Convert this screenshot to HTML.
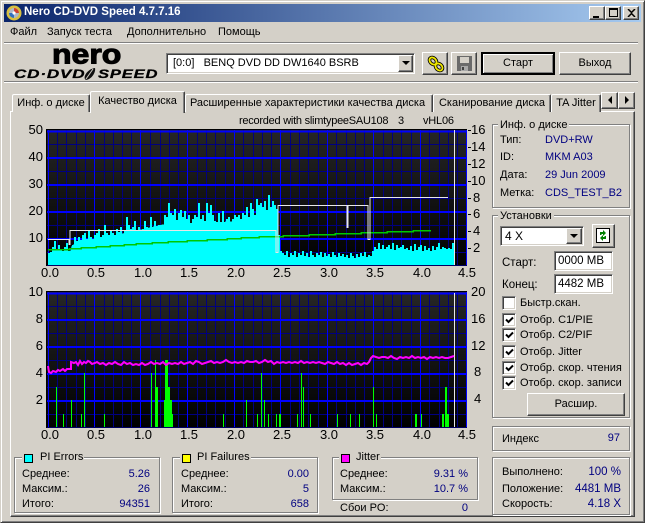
<!DOCTYPE html>
<html><head><meta charset="utf-8"><style>
html,body{margin:0;padding:0;background:#d4d0c8}
#w{position:relative;width:645px;height:523px;overflow:hidden;background:#d4d0c8;font:11px/13px "Liberation Sans","Noto Sans CJK SC",sans-serif;color:#000}
#w div,#w svg{position:absolute;box-sizing:border-box}
.t{white-space:nowrap;height:13px}
.n{color:#000080}
.r{text-align:right}
.c{text-align:center}
.a{font-size:13px;line-height:14px;height:14px;white-space:nowrap;color:#000}
.up{background:#d4d0c8;border:1px solid;border-color:#fff #404040 #404040 #fff;box-shadow:inset -1px -1px 0 #808080}
.sk{background:#fff;border:1px solid;border-color:#808080 #fff #fff #808080;box-shadow:inset 1px 1px 0 #404040,inset -1px -1px 0 #d4d0c8}
.g{border:1px solid #808080;box-shadow:1px 1px 0 #fff,inset 1px 1px 0 #fff}
.l{background:#d4d0c8;height:13px;white-space:nowrap;padding:0 2px}
.tab{background:#d4d0c8;border:1px solid;border-color:#fff #404040 transparent #fff;border-bottom:0;border-radius:2px 2px 0 0;box-shadow:inset -1px 0 0 #808080;text-align:center;white-space:nowrap}
.cb{width:14px;height:14px;left:502px}
.sw{width:9px;height:9px;border:1px solid #000;box-sizing:border-box}
.hl{height:1px;background:#808080;box-shadow:0 1px 0 #fff}
</style></head><body><div id="w">
<!-- window edges -->
<div style="left:0;top:0;width:645px;height:523px;border:1px solid;border-color:#d4d0c8 #404040 #404040 #d4d0c8;box-shadow:inset 1px 1px 0 #fff,inset -1px -1px 0 #808080"></div>
<!-- title -->
<div style="left:4px;top:4px;width:637px;height:18px;background:linear-gradient(90deg,#0a246a,#a6caf0)"></div>
<svg style="left:6px;top:5px" width="16" height="16" viewBox="0 0 16 16"><circle cx="8" cy="8" r="7.5" fill="#d8c040"/><circle cx="8" cy="8" r="5" fill="#b0b8c8"/><path d="M8 3a5 5 0 0 1 5 5H8z" fill="#d04030"/><path d="M8 8v5a5 5 0 0 1-5-5z" fill="#3070c0"/><circle cx="8" cy="8" r="1.6" fill="#fff"/></svg>
<div class="t" style="left:24px;top:6px;color:#fff;font-weight:bold;font-size:11.5px">Nero CD-DVD Speed 4.7.7.16</div>
<div class="up" style="left:589px;top:6px;width:16px;height:14px"><svg style="left:3px;top:2px" width="9" height="9"><rect x="0" y="7" width="6" height="2"/></svg></div>
<div class="up" style="left:605px;top:6px;width:16px;height:14px"><svg style="left:3px;top:1px" width="9" height="9"><path d="M.5 1.5h8v7h-8z" fill="none" stroke="#000"/><rect width="9" height="2"/></svg></div>
<div class="up" style="left:623px;top:6px;width:16px;height:14px"><svg style="left:3px;top:2px" width="9" height="8"><path d="M1 0l3.500 3.500L8 0M1 8l3.500-3.500L8 8" fill="none" stroke="#000" stroke-width="1.500"/></svg></div>
<!-- menu -->
<div class="t" style="left:10px;top:26px">Файл</div>
<div class="t" style="left:47px;top:26px">Запуск теста</div>
<div class="t" style="left:127px;top:26px">Дополнительно</div>
<div class="t" style="left:218px;top:26px">Помощь</div>
<div class="hl" style="left:4px;top:42px;width:634px"></div>
<div class="hl" style="left:4px;top:81px;width:634px"></div>
<!-- logo -->
<div class="t" style="left:52px;top:36px;height:32px;font:bold 32px/32px 'Liberation Sans',sans-serif;-webkit-text-stroke:1.2px #000;letter-spacing:0;transform-origin:0 100%;transform:scaleY(.88)">nero</div>
<div class="t" style="left:14px;top:67px;height:14px;font:italic bold 12px/14px 'Liberation Sans',sans-serif;letter-spacing:.6px;-webkit-text-stroke:.3px #000;transform-origin:0 50%;transform:scaleX(1.42)">CD·DVD</div>
<svg style="left:81px;top:67px" width="16" height="14"><path d="M5 13C1 11 6 2 14 1c1 4-3 11-9 12z" fill="#111"/><path d="M5 12L12 2" stroke="#d4d0c8"/></svg>
<div class="t" style="left:98px;top:67px;height:14px;font:italic bold 12px/14px 'Liberation Sans',sans-serif;letter-spacing:.6px;-webkit-text-stroke:.3px #000;transform-origin:0 50%;transform:scaleX(1.38)">SPEED</div>
<!-- drive combo -->
<div class="sk" style="left:166px;top:53px;width:249px;height:21px"></div>
<div class="t" style="left:173px;top:57px;white-space:pre">[0:0]   BENQ DVD DD DW1640 BSRB</div>
<div class="up" style="left:398px;top:55px;width:15px;height:17px"><svg style="left:3px;top:5px" width="8" height="5"><path d="M0 0h8L4 4z"/></svg></div>
<div class="up" style="left:422px;top:52px;width:26px;height:23px"><svg style="left:3px;top:2px" width="20" height="18" viewBox="0 0 20 18"><g fill="none" stroke="#000" stroke-width="3.500"><ellipse cx="7" cy="6" rx="4" ry="3" transform="rotate(45 7 6)"/><ellipse cx="13" cy="12" rx="4" ry="3" transform="rotate(45 13 12)"/></g><g fill="none" stroke="#f0e800" stroke-width="1.800"><ellipse cx="7" cy="6" rx="4" ry="3" transform="rotate(45 7 6)"/><ellipse cx="13" cy="12" rx="4" ry="3" transform="rotate(45 13 12)"/></g></svg></div>
<div class="up" style="left:451px;top:52px;width:26px;height:23px"><svg style="left:5px;top:3px" width="15" height="15" viewBox="0 0 15 15"><path d="M0 0h15v15H0z" fill="#6a6a6a"/><path d="M3 1h9v6H3z" fill="#d4d0c8"/><path d="M4 10h7v5H4z" fill="#a8a8a8"/><path d="M5 11h2v3H5z" fill="#404040"/></svg></div>
<div class="up" style="left:481px;top:52px;width:74px;height:23px;border:2px solid #000;outline:0;box-shadow:inset 1px 1px 0 #fff,inset -1px -1px 0 #808080"></div>
<div class="t c" style="left:481px;top:57px;width:74px">Старт</div>
<div class="up" style="left:559px;top:52px;width:72px;height:23px"></div>
<div class="t c" style="left:559px;top:57px;width:72px">Выход</div>
<!-- page -->
<div style="left:10px;top:111px;width:625px;height:406px;border:1px solid;border-color:#fff #404040 #404040 #fff;box-shadow:inset -1px -1px 0 #808080"></div>
<!-- tabs -->
<div class="tab" style="left:12px;top:94px;width:78px;height:18px;padding-top:2px">Инф. о диске</div>
<div class="tab" style="left:185px;top:94px;width:248px;height:18px;padding:2px 3px 0 0">Расширенные характеристики качества диска</div>
<div class="tab" style="left:433px;top:94px;width:118px;height:18px;padding-top:2px">Сканирование диска</div>
<div class="tab" style="left:551px;top:94px;width:50px;height:18px;padding-top:2px">TA Jitter</div>
<div class="tab" style="left:90px;top:91px;width:95px;height:22px;padding-top:3px;z-index:2">Качество диска</div>
<div class="up" style="left:601px;top:92px;width:17px;height:17px;z-index:2"><svg style="left:5px;top:3px" width="6" height="9"><path d="M5 0v8L1 4z"/></svg></div>
<div class="up" style="left:618px;top:92px;width:17px;height:17px;z-index:2"><svg style="left:5px;top:3px" width="6" height="9"><path d="M1 0v8l4-4z"/></svg></div>

<!-- charts -->
<svg style="left:0;top:0" width="645" height="523" viewBox="0 0 645 523">
<defs><linearGradient id="bg" x1="0" y1="0" x2="0" y2="1"><stop offset="0" stop-color="#262626"/><stop offset="1" stop-color="#000"/></linearGradient>
<g id="vm" stroke="#000080" stroke-width="1">
<path d="M57.500 0v136M66.500 0v136M76.500 0v136M85.500 0v136M104.500 0v136M113.500 0v136M122.500 0v136M131.500 0v136M150.500 0v136M160.500 0v136M169.500 0v136M178.500 0v136M197.500 0v136M206.500 0v136M215.500 0v136M225.500 0v136M243.500 0v136M253.500 0v136M262.500 0v136M271.500 0v136M290.500 0v136M299.500 0v136M308.500 0v136M318.500 0v136M336.500 0v136M346.500 0v136M355.500 0v136M364.500 0v136M383.500 0v136M392.500 0v136M401.500 0v136M411.500 0v136M429.500 0v136M439.500 0v136M448.500 0v136M457.500 0v136"/>
<path d="M47 14.500h420M47 41.500h420M47 68.500h420M47 95.500h420M47 122.500h420"/>
</g>
<g id="vM" stroke="#0000ff" stroke-width="1">
<path d="M48.500 0v136M94.500 0v136M140.500 0v136M187.500 0v136M234.500 0v136M280.500 0v136M327.500 0v136M373.500 0v136M420.500 0v136M466.500 0v136"/>
<path d="M47 1.500h420M47 28h420M47 55h420M47 82h420M47 109h420" stroke-width="2"/>
<path d="M47 135.500h420" stroke="#000060"/>
</g></defs>
<g shape-rendering="crispEdges">
<rect x="46" y="129" width="421" height="137" fill="#000"/>
<rect x="47" y="130" width="420" height="136" fill="url(#bg)"/>
<use href="#vm" y="130"/><use href="#vM" y="130"/>
<path transform="translate(0 265) scale(1 -1)" fill="#00ffff" d="M48 0V12h2V13h2V18h2V24h2V16h2V20h2V16h2V14h2V18h2V22h2V14h2V12h2V16h2V28h2V24h2V28h2V25h2V30h2V32h2V26h2V34h2V28h2V26h2V30h2V32h2V36h2V28h2V30h2V40h2V32h2V30h2V34h2V32h2V28h2V36h2V33h2V38h2V30h2V34h2V48h2V40h2V36h2V38h2V44h2V34h2V38h2V34h2V36h2V44h2V38h2V36h2V48h2V36h2V44h2V38h2V40h2V35h2V40h2V50h2V48h2V62h2V52h2V50h2V56h2V45h2V52h2V55h2V48h2V54h2V46h2V50h2V42h2V46h2V50h2V48h2V62h2V46h2V50h2V44h2V62h2V52h2V60h2V50h2V44h2V38h2V52h2V36h2V54h2V40h2V46h2V48h2V42h2V46h2V50h2V48h2V50h2V46h2V52h2V50h2V58h2V48h2V62h2V56h2V50h2V66h2V60h2V62h2V58h2V64h2V55h2V70h2V58h2V64h2V60h2V56h2V30h2V14h2V12h2V10h2V14h2V8h2V12h2V10h2V14h2V8h2V12h2V10h2V14h2V9h2V12h2V8h2V14h2V10h2V8h2V12h2V10h2V13h2V8h2V12h2V9h2V11h2V8h2V13h2V10h2V8h2V12h2V9h2V11h2V8h2V10h2V7h2V12h2V9h2V6h2V11h2V8h2V12h2V9h2V13h2V8h2V10h2V9h2V14h2V18h2V16h2V22h2V16h2V20h2V16h2V18h2V20h2V16h2V22h2V15h2V20h2V17h2V18h2V20h2V16h2V17h2V15h2V19h2V14h2V21h2V15h2V18h2V20h2V14h2V19h2V15h2V17h2V14h2V19h2V15h2V18h2V22h2V16h2V18h2V17h2V16h2V17h2V16h2V22h2V0z"/>
<!-- solid base under the noisy cyan columns -->
<path fill="#00ffff" d="M48 265V255L70 252L72 245L100 238L130 232L165 224L200 223L240 221L276 216V265zM280 265V258H372V251H454V265z"/>
<path d="M48 249.500h21v-1h12v-1h15v-1h14v-1h14v-1h12v-1h16v-1h16v-1h19v-1h20v-1h20v-1h14v-1h18v-1h24v-1h26v-1h26v-1h26v-1h26v-1h26v-1h18" fill="none" stroke="#00c800" stroke-width="1.500"/>
<path d="M48 239.500h21v5h1v-14h206v22h2v-47h69v22h1v-22h20v34h2v-42h78" fill="none" stroke="#e8e8e8" stroke-width="1"/>
<rect x="454" y="130" width="1" height="135" fill="#e8e8e8"/>

<rect x="46" y="291" width="421" height="137" fill="#000"/>
<rect x="47" y="292" width="420" height="136" fill="url(#bg)"/>
<use href="#vm" y="292"/><use href="#vM" y="292"/>
<rect x="454" y="293" width="1" height="134" fill="#e8e8e8"/>
<path fill="#00ff00" d="M56 387h1v40h-1zM63 414h1v13h-1zM71 400h1v27h-1zM81 414h1v13h-1zM84 373h1v54h-1zM104 414h1v13h-1zM151 373h1v54h-1zM155 360h1v67h-1zM156 387h2v40h-2zM164 400h1v27h-1zM165 360h3v67h-3zM168 387h2v40h-2zM170 400h2v27h-2zM172 414h1v13h-1zM223 414h1v13h-1zM246 400h1v27h-1zM257 414h1v13h-1zM261 373h1v54h-1zM264 400h1v27h-1zM268 414h1v13h-1zM276 414h1v13h-1zM279 414h2v13h-2zM297 414h1v13h-1zM301 373h1v54h-1zM303 387h1v40h-1zM310 414h1v13h-1zM337 414h1v13h-1zM350 414h1v13h-1zM359 414h1v13h-1zM373 387h1v40h-1zM376 414h1v13h-1zM415 414h2v13h-2zM421 414h1v13h-1zM442 414h2v13h-2zM445 387h2v40h-2zM447 414h2v13h-2z"/>
</g>
<polyline fill="none" stroke="#ff00ff" stroke-width="2" points="48,366 49,372 51,373 53,371 56,372 58,370 60,371 63,369 65,371 67,369 69,369 71,369 71,362 74,363 76,362 78,365 80,361 82,364 84,362 86,363 88,361 90,362 92,364 95,363 97,362 100,364 103,363 106,365 109,363 112,364 115,362 118,364 121,365 124,362 127,364 130,363 133,365 136,364 139,365 142,363 145,365 148,364 151,362 154,364 157,363 160,364 163,362 166,365 169,363 172,364 175,363 178,364 181,362 184,364 187,363 190,362 193,364 196,361 199,362 202,364 205,363 208,362 211,361 214,363 217,362 220,363 223,362 226,360 229,362 232,363 235,362 238,363 241,362 244,363 247,361 250,362 253,362 256,361 259,363 262,362 265,360 268,362 271,361 274,364 277,362 280,363 283,362 286,363 289,362 292,363 295,362 298,363 301,361 304,363 307,362 310,363 313,362 316,363 319,362 322,363 325,364 328,362 331,363 334,364 337,362 340,364 343,363 346,365 349,363 352,365 355,364 358,363 361,365 364,363 367,364 369,362 371,358 373,356 376,357 379,358 382,357 385,357 388,358 391,356 394,358 397,359 400,357 403,358 406,357 409,358 412,356 415,358 418,357 421,358 424,357 427,359 430,357 433,358 436,357 439,358 442,357 445,358 448,358 451,357 454,356"/>
<g stroke="#000" shape-rendering="crispEdges"><path d="M468 130.500h3M468 147.500h3M468 164.500h3M468 181.500h3M468 198.500h3M468 214.500h3M468 231.500h3M468 248.500h3"/></g>
</svg>
<!-- chart title -->
<div class="t" style="left:239px;top:115px;letter-spacing:-.25px">recorded with slimtypeeSAU108</div>
<div class="t" style="left:398px;top:115px">3</div>
<div class="t" style="left:423px;top:115px;letter-spacing:-.2px">vHL06</div>
<!-- left axis top -->
<div class="a r" style="left:23px;top:123px;width:20px">50</div>
<div class="a r" style="left:23px;top:150px;width:20px">40</div>
<div class="a r" style="left:23px;top:177px;width:20px">30</div>
<div class="a r" style="left:23px;top:204px;width:20px">20</div>
<div class="a r" style="left:23px;top:231px;width:20px">10</div>
<!-- right axis top -->
<div class="a" style="left:471px;top:123px">16</div>
<div class="a" style="left:471px;top:140px">14</div>
<div class="a" style="left:471px;top:157px">12</div>
<div class="a" style="left:471px;top:174px">10</div>
<div class="a" style="left:473px;top:191px">8</div>
<div class="a" style="left:473px;top:207px">6</div>
<div class="a" style="left:473px;top:224px">4</div>
<div class="a" style="left:473px;top:241px">2</div>
<!-- x axis top -->
<div class="a c" style="left:35px;top:266px;width:30px">0.0</div>
<div class="a c" style="left:81px;top:266px;width:30px">0.5</div>
<div class="a c" style="left:128px;top:266px;width:30px">1.0</div>
<div class="a c" style="left:174px;top:266px;width:30px">1.5</div>
<div class="a c" style="left:221px;top:266px;width:30px">2.0</div>
<div class="a c" style="left:267px;top:266px;width:30px">2.5</div>
<div class="a c" style="left:314px;top:266px;width:30px">3.0</div>
<div class="a c" style="left:360px;top:266px;width:30px">3.5</div>
<div class="a c" style="left:407px;top:266px;width:30px">4.0</div>
<div class="a c" style="left:452px;top:266px;width:30px">4.5</div>
<!-- left axis bottom -->
<div class="a r" style="left:23px;top:285px;width:20px">10</div>
<div class="a r" style="left:23px;top:312px;width:20px">8</div>
<div class="a r" style="left:23px;top:339px;width:20px">6</div>
<div class="a r" style="left:23px;top:366px;width:20px">4</div>
<div class="a r" style="left:23px;top:393px;width:20px">2</div>
<!-- right axis bottom -->
<div class="a" style="left:471px;top:285px">20</div>
<div class="a" style="left:471px;top:312px">16</div>
<div class="a" style="left:471px;top:339px">12</div>
<div class="a" style="left:474px;top:365px">8</div>
<div class="a" style="left:474px;top:392px">4</div>
<!-- x axis bottom -->
<div class="a c" style="left:35px;top:428px;width:30px">0.0</div>
<div class="a c" style="left:81px;top:428px;width:30px">0.5</div>
<div class="a c" style="left:128px;top:428px;width:30px">1.0</div>
<div class="a c" style="left:174px;top:428px;width:30px">1.5</div>
<div class="a c" style="left:221px;top:428px;width:30px">2.0</div>
<div class="a c" style="left:267px;top:428px;width:30px">2.5</div>
<div class="a c" style="left:314px;top:428px;width:30px">3.0</div>
<div class="a c" style="left:360px;top:428px;width:30px">3.5</div>
<div class="a c" style="left:407px;top:428px;width:30px">4.0</div>
<div class="a c" style="left:452px;top:428px;width:30px">4.5</div>

<!-- disc info -->
<div class="g" style="left:492px;top:124px;width:138px;height:84px"></div>
<div class="l" style="left:498px;top:119px">Инф. о диске</div>
<div class="t" style="left:500px;top:134px">Тип:</div><div class="t n" style="left:545px;top:134px">DVD+RW</div>
<div class="t" style="left:500px;top:151px">ID:</div><div class="t n" style="left:545px;top:151px">MKM A03</div>
<div class="t" style="left:500px;top:169px">Дата:</div><div class="t n" style="left:545px;top:169px">29 Jun 2009</div>
<div class="t" style="left:500px;top:187px">Метка:</div><div class="t n" style="left:545px;top:187px">CDS_TEST_B2</div>
<!-- settings -->
<div class="g" style="left:492px;top:215px;width:138px;height:203px"></div>
<div class="l" style="left:498px;top:210px">Установки</div>
<div class="sk" style="left:500px;top:226px;width:84px;height:20px"></div>
<div class="t" style="left:505px;top:230px;font-size:12px;white-space:pre">4 X</div>
<div class="up" style="left:566px;top:228px;width:16px;height:16px"><svg style="left:3px;top:5px" width="8" height="5"><path d="M0 0h8L4 4z"/></svg></div>
<div class="up" style="left:592px;top:224px;width:23px;height:24px"><svg style="left:3px;top:3px" width="15" height="16" viewBox="0 0 15 16"><rect x=".5" y=".5" width="13" height="14" fill="#fff" stroke="#000"/><path d="M4 7V4h3V2l3 3-3 3V6H5.500v1zM10 8v3H7v2l-3-3 3-3v2h1.500V8z" fill="#008000"/></svg></div>
<div class="t" style="left:502px;top:257px;font-size:11.500px">Старт:</div>
<div class="sk" style="left:554px;top:251px;width:59px;height:20px"></div>
<div class="t" style="left:558px;top:255px;font-size:11.500px">0000 MB</div>
<div class="t" style="left:502px;top:279px;font-size:11.500px">Конец:</div>
<div class="sk" style="left:554px;top:274px;width:59px;height:20px"></div>
<div class="t" style="left:558px;top:278px;font-size:11.500px">4482 MB</div>
<div class="sk cb" style="top:296px"></div><div class="t" style="left:520px;top:297px">Быстр.скан.</div>
<div class="sk cb" style="top:313px"><svg style="left:2px;top:2px" width="9" height="9"><path d="M1 3.500l2.500 2.500L8 1.500" fill="none" stroke="#000" stroke-width="2"/></svg></div><div class="t" style="left:520px;top:314px">Отобр. C1/PIE</div>
<div class="sk cb" style="top:328px"><svg style="left:2px;top:2px" width="9" height="9"><path d="M1 3.500l2.500 2.500L8 1.500" fill="none" stroke="#000" stroke-width="2"/></svg></div><div class="t" style="left:520px;top:329px">Отобр. C2/PIF</div>
<div class="sk cb" style="top:345px"><svg style="left:2px;top:2px" width="9" height="9"><path d="M1 3.500l2.500 2.500L8 1.500" fill="none" stroke="#000" stroke-width="2"/></svg></div><div class="t" style="left:520px;top:346px">Отобр. Jitter</div>
<div class="sk cb" style="top:361px"><svg style="left:2px;top:2px" width="9" height="9"><path d="M1 3.500l2.500 2.500L8 1.500" fill="none" stroke="#000" stroke-width="2"/></svg></div><div class="t" style="left:520px;top:362px">Отобр. скор. чтения</div>
<div class="sk cb" style="top:376px"><svg style="left:2px;top:2px" width="9" height="9"><path d="M1 3.500l2.500 2.500L8 1.500" fill="none" stroke="#000" stroke-width="2"/></svg></div><div class="t" style="left:520px;top:377px">Отобр. скор. записи</div>
<div class="up" style="left:527px;top:393px;width:98px;height:23px"></div>
<div class="t c" style="left:527px;top:398px;width:98px">Расшир.</div>
<!-- index -->
<div class="g" style="left:492px;top:426px;width:138px;height:25px"></div>
<div class="t" style="left:502px;top:433px">Индекс</div>
<div class="t n r" style="left:580px;top:432px;width:40px">97</div>
<!-- status -->
<div class="g" style="left:492px;top:457px;width:138px;height:58px"></div>
<div class="t" style="left:502px;top:466px">Выполнено:</div><div class="t n r" style="left:570px;top:466px;width:51px;font-size:11.500px">100 %</div>
<div class="t" style="left:502px;top:483px">Положение:</div><div class="t n r" style="left:570px;top:483px;width:51px;font-size:11.500px">4481 MB</div>
<div class="t" style="left:502px;top:498px">Скорость:</div><div class="t n r" style="left:570px;top:498px;width:51px;font-size:11.500px">4.18 X</div>
<!-- PI Errors -->
<div class="g" style="left:14px;top:457px;width:146px;height:56px"></div>
<div class="l" style="left:22px;top:451px;padding-right:1px"><span style="display:inline-block;width:16px"></span>PI Errors</div>
<div class="sw" style="left:24px;top:454px;background:#00ffff"></div>
<div class="t" style="left:22px;top:468px">Среднее:</div><div class="t n r" style="left:100px;top:468px;width:50px">5.26</div>
<div class="t" style="left:22px;top:483px">Максим.:</div><div class="t n r" style="left:100px;top:483px;width:50px">26</div>
<div class="t" style="left:22px;top:498px">Итого:</div><div class="t n r" style="left:100px;top:498px;width:50px">94351</div>
<!-- PI Failures -->
<div class="g" style="left:172px;top:457px;width:146px;height:56px"></div>
<div class="l" style="left:180px;top:451px;padding-right:1px"><span style="display:inline-block;width:15px"></span>PI Failures</div>
<div class="sw" style="left:182px;top:454px;background:#ffff00"></div>
<div class="t" style="left:181px;top:468px">Среднее:</div><div class="t n r" style="left:259px;top:468px;width:50px">0.00</div>
<div class="t" style="left:181px;top:483px">Максим.:</div><div class="t n r" style="left:259px;top:483px;width:50px">5</div>
<div class="t" style="left:181px;top:498px">Итого:</div><div class="t n r" style="left:259px;top:498px;width:50px">658</div>
<!-- Jitter -->
<div class="g" style="left:332px;top:457px;width:146px;height:43px"></div>
<div class="l" style="left:339px;top:451px;padding-right:1px"><span style="display:inline-block;width:15px"></span>Jitter</div>
<div class="sw" style="left:341px;top:454px;background:#ff00ff"></div>
<div class="t" style="left:340px;top:468px">Среднее:</div><div class="t n r" style="left:418px;top:468px;width:50px">9.31 %</div>
<div class="t" style="left:340px;top:483px">Максим.:</div><div class="t n r" style="left:418px;top:483px;width:50px">10.7 %</div>
<div class="t" style="left:340px;top:502px">Сбои PO:</div><div class="t n r" style="left:418px;top:502px;width:50px">0</div>
</div></body></html>
